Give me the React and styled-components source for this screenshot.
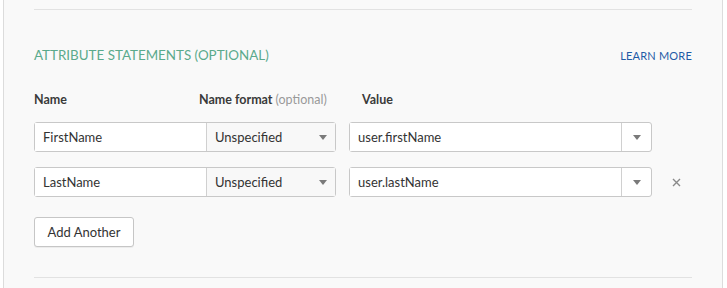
import styled, { createGlobalStyle } from "styled-components";

const GlobalStyle = createGlobalStyle`
  html, body {
    margin: 0;
    padding: 0;
    background: #fff;
  }
  body {
    font-family: "Lato", "Open Sans", "Liberation Sans", sans-serif;
    color: #333;
  }
`;

const Panel = styled.div`
  margin: 0 4px 0 3px;
  height: 288px;
  box-sizing: border-box;
  background: #f9f9f9;
  border-left: 1px solid #dcdcdc;
  border-right: 1px solid #dcdcdc;
  padding: 9px 30px 0 30px;
`;

const Rule = styled.hr`
  margin: 0;
  border: none;
  border-top: 1px solid #e2e2e2;
`;

const Header = styled.div`
  display: flex;
  align-items: center;
  justify-content: space-between;
  margin-top: 35px;
  height: 20px;
`;

const Heading = styled.h3`
  margin: 0;
  font-size: 13.4px;
  font-weight: 400;
  color: #5aaa8c;
`;

const LearnMore = styled.a`
  font-size: 11px;
  color: #1f5ba6;
  text-decoration: none;
  letter-spacing: 0.2px;
`;

const LabelRow = styled.div`
  display: grid;
  grid-template-columns: 165px 163px auto;
  margin-top: 26px;
  height: 16px;
  align-items: center;
`;

const Label = styled.span`
  font-size: 12.5px;
  font-weight: 700;
  color: #3a3a3a;
`;

const Optional = styled.span`
  font-weight: 400;
  color: #999;
`;

const Rows = styled.div`
  display: flex;
  flex-direction: column;
  gap: 15px;
  margin-top: 15px;
`;

const Row = styled.div`
  display: flex;
  align-items: center;
  height: 30px;
`;

const Group = styled.div`
  display: flex;
  height: 30px;
  border: 1px solid #c8c8c8;
  border-radius: 3px;
  background: #fff;
  box-sizing: border-box;
  width: ${(p) => p.$w}px;
  margin-right: ${(p) => p.$mr || 0}px;
`;

const Field = styled.div`
  flex: ${(p) => (p.$w ? `0 0 ${p.$w}px` : "1")};
  display: flex;
  align-items: center;
  justify-content: space-between;
  padding: 0 8px;
  font-size: 13px;
  color: #333;
  border-left: ${(p) => (p.$divided ? "1px solid #d0d0d0" : "none")};
  background: ${(p) => (p.$shade ? "#f8f8f8" : "#fff")};
  box-sizing: border-box;
`;

const ArrowCell = styled.div`
  flex: 0 0 29px;
  display: flex;
  align-items: center;
  justify-content: center;
  border-left: 1px solid #d0d0d0;
`;

const Caret = styled.span`
  width: 0;
  height: 0;
  border-left: 4px solid transparent;
  border-right: 4px solid transparent;
  border-top: 5px solid #7a7a7a;
`;

const Remove = styled.button`
  border: none;
  background: none;
  padding: 0;
  margin-left: 19px;
  width: 10px;
  height: 10px;
  display: flex;
  align-items: center;
  justify-content: center;
  cursor: pointer;
`;

const AddButton = styled.button`
  margin-top: 20px;
  height: 30px;
  width: 100px;
  font-family: inherit;
  font-size: 13px;
  color: #333;
  background: #fff;
  border: 1px solid #c6c6c6;
  border-radius: 3px;
  box-shadow: 0 1px 0 rgba(0, 0, 0, 0.05);
  cursor: pointer;
`;

const BottomRule = styled(Rule)`
  margin-top: 30px;
`;

function AttributeRow({ name, value, removable }) {
  return (
    <Row>
      <Group $w={302} $mr={13}>
        <Field>{name}</Field>
        <Field $w={129} $divided $shade>
          Unspecified
          <Caret />
        </Field>
      </Group>
      <Group $w={303}>
        <Field>{value}</Field>
        <ArrowCell>
          <Caret />
        </ArrowCell>
      </Group>
      {removable && (
        <Remove aria-label="Remove">
          <svg width="9" height="9" viewBox="0 0 9 9">
            <path d="M1 1L8 8M8 1L1 8" stroke="#8a8a8a" strokeWidth="1.4" />
          </svg>
        </Remove>
      )}
    </Row>
  );
}

export default function App() {
  return (
    <>
      <GlobalStyle />
      <Panel>
        <Rule />
        <Header>
          <Heading>ATTRIBUTE STATEMENTS (OPTIONAL)</Heading>
          <LearnMore href="#">LEARN MORE</LearnMore>
        </Header>
        <LabelRow>
          <Label>Name</Label>
          <Label>
            Name format <Optional>(optional)</Optional>
          </Label>
          <Label>Value</Label>
        </LabelRow>
        <Rows>
          <AttributeRow name="FirstName" value="user.firstName" />
          <AttributeRow name="LastName" value="user.lastName" removable />
        </Rows>
        <AddButton>Add Another</AddButton>
        <BottomRule />
      </Panel>
    </>
  );
}
